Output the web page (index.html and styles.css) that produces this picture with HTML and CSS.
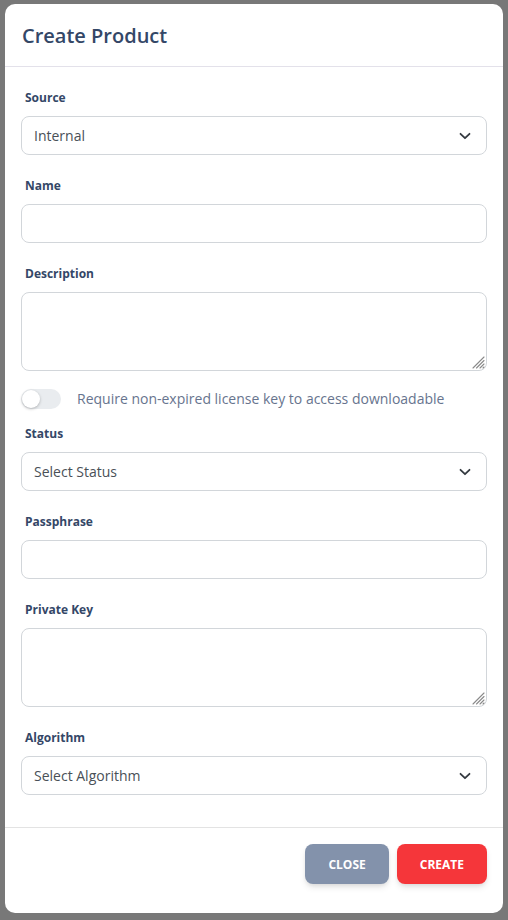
FILE: index.html
```html
<!DOCTYPE html>
<html lang="en">
<head>
<meta charset="utf-8">
<title>Create Product</title>
<link rel="stylesheet" href="styles.css">
</head>
<body>
<div class="modal">
  <div class="modal-header">
    <h5 class="modal-title">Create Product</h5>
  </div>
  <div class="modal-body">
    <div class="group">
      <label class="label">Source</label>
      <div class="select">
        <span class="select-text">Internal</span>
        <svg class="chev" width="12" height="8" viewBox="0 0 12 8"><path d="M1.5 1.8 L6 6.2 L10.5 1.8" fill="none" stroke="#343a40" stroke-width="1.8" stroke-linecap="round" stroke-linejoin="round"/></svg>
      </div>
    </div>
    <div class="group">
      <label class="label">Name</label>
      <input class="input" type="text">
    </div>
    <div class="group group-tight">
      <label class="label">Description</label>
      <div class="ta-wrap">
        <textarea class="input textarea"></textarea>
        <svg class="grip" width="14" height="14" viewBox="0 0 14 14"><path d="M13 2 L2 13 M13 5.5 L5.5 13 M13 9 L9 13 M13 12 L12 13" stroke="#8a8a8a" stroke-width="1.1" stroke-linecap="round"/></svg>
      </div>
    </div>
    <div class="toggle-row">
      <span class="switch"><span class="knob"></span></span>
      <span class="toggle-text">Require non-expired license key to access downloadable</span>
    </div>
    <div class="group">
      <label class="label">Status</label>
      <div class="select">
        <span class="select-text">Select Status</span>
        <svg class="chev" width="12" height="8" viewBox="0 0 12 8"><path d="M1.5 1.8 L6 6.2 L10.5 1.8" fill="none" stroke="#343a40" stroke-width="1.8" stroke-linecap="round" stroke-linejoin="round"/></svg>
      </div>
    </div>
    <div class="group">
      <label class="label">Passphrase</label>
      <input class="input" type="text">
    </div>
    <div class="group">
      <label class="label">Private Key</label>
      <div class="ta-wrap">
        <textarea class="input textarea"></textarea>
        <svg class="grip" width="14" height="14" viewBox="0 0 14 14"><path d="M13 2 L2 13 M13 5.5 L5.5 13 M13 9 L9 13 M13 12 L12 13" stroke="#8a8a8a" stroke-width="1.1" stroke-linecap="round"/></svg>
      </div>
    </div>
    <div class="group">
      <label class="label">Algorithm</label>
      <div class="select">
        <span class="select-text">Select Algorithm</span>
        <svg class="chev" width="12" height="8" viewBox="0 0 12 8"><path d="M1.5 1.8 L6 6.2 L10.5 1.8" fill="none" stroke="#343a40" stroke-width="1.8" stroke-linecap="round" stroke-linejoin="round"/></svg>
      </div>
    </div>
  </div>
  <div class="modal-footer">
    <button class="btn btn-close">CLOSE</button>
    <button class="btn btn-create">CREATE</button>
  </div>
</div>
</body>
</html>
```
FILE: styles.css
```css
* { box-sizing: border-box; }
html, body { margin: 0; height: 100%; }
body {
  background: #787878;
  padding: 4px 5px 0 5px;
  font-family: "Open Sans", "Noto Sans", sans-serif;
}
.modal {
  width: 498px;
  height: 909px;
  background: #fff;
  border-radius: 10px;
  display: flex;
  flex-direction: column;
  overflow: hidden;
}
.modal-header {
  flex: none;
  height: 63px;
  border-bottom: 1px solid #e3e1ea;
  display: flex;
  align-items: center;
  padding: 0 17px;
}
.modal-title {
  margin: 0;
  font-size: 20px;
  font-weight: 600;
  color: #344767;
  line-height: 1;
  padding-top: 2px;
}
.modal-body {
  padding: 22px 16px 10px;
  flex: 1 1 auto;
  min-height: 0;
}
.group { margin-bottom: 22px; }
.group-tight { margin-bottom: 18px; }
.label {
  display: block;
  margin: 0 0 9px 4px;
  font-size: 12px;
  line-height: 18px;
  font-weight: 700;
  color: #344767;
}
.select, .input {
  width: 100%;
  height: 39px;
  border: 1px solid #d2d6da;
  border-radius: 8px;
  background: #fff;
  font-family: inherit;
  font-size: 14px;
  color: #495057;
  display: block;
  outline: none;
}
.select {
  display: flex;
  align-items: center;
  justify-content: space-between;
  padding: 0 15px 0 12px;
}
.select-text { line-height: 1; }
.chev { display: block; }
.ta-wrap { position: relative; }
.textarea {
  height: 79px;
  resize: none;
  padding: 8px 12px;
}
.grip {
  position: absolute;
  right: 2px;
  bottom: 2px;
  display: block;
}
.toggle-row {
  display: flex;
  align-items: center;
  height: 20px;
  margin-bottom: 16px;
}
.switch {
  width: 40px;
  height: 20px;
  border-radius: 10px;
  background: #e9ecef;
  position: relative;
  flex: none;
}
.knob {
  position: absolute;
  left: 1px;
  top: 1px;
  width: 18px;
  height: 18px;
  border-radius: 50%;
  background: #fff;
  box-shadow: 0 1px 3px rgba(0,0,0,0.25);
}
.toggle-text {
  margin-left: 16px;
  font-size: 14px;
  color: #67748e;
  line-height: 20px;
}
.modal-footer {
  flex: none;
  border-top: 1px solid #e3e3e3;
  display: flex;
  justify-content: flex-end;
  gap: 8px;
  padding: 16px 16px 29px;
}
.btn {
  height: 40px;
  border: 0;
  border-radius: 8px;
  font-family: inherit;
  font-size: 12px;
  font-weight: 700;
  color: #fff;
  padding: 0 23px;
  box-shadow: 0 4px 7px -1px rgba(0,0,0,0.11), 0 2px 4px -1px rgba(0,0,0,0.07);
}
.btn-close { background: #8392ab; }
.btn-create { background: #f5363a; }
```
